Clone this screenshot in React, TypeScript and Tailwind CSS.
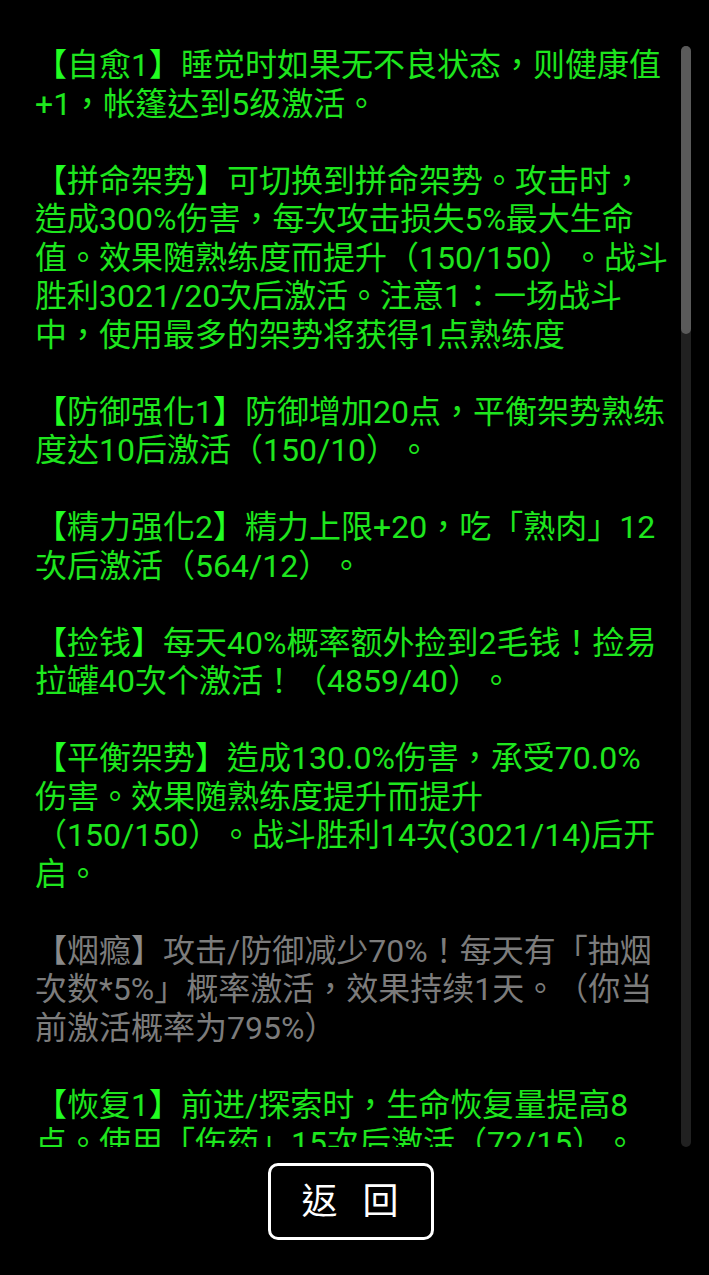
const perks = [
  {
    title: "自愈1",
    text: "睡觉时如果无不良状态，则健康值+1，帐篷达到5级激活。",
  },
  {
    title: "拼命架势",
    text: "可切换到拼命架势。攻击时，造成300%伤害，每次攻击损失5%最大生命值。效果随熟练度而提升（150/150）。战斗胜利3021/20次后激活。注意1：一场战斗中，使用最多的架势将获得1点熟练度",
  },
  {
    title: "防御强化1",
    text: "防御增加20点，平衡架势熟练度达10后激活（150/10）。",
  },
  {
    title: "精力强化2",
    text: "精力上限+20，吃「熟肉」12次后激活（564/12）。",
  },
  {
    title: "捡钱",
    text: "每天40%概率额外捡到2毛钱！捡易拉罐40次个激活！（4859/40）。",
  },
  {
    title: "平衡架势",
    text: "造成130.0%伤害，承受70.0%伤害。效果随熟练度提升而提升（150/150）。战斗胜利14次(3021/14)后开启。",
  },
  {
    title: "烟瘾",
    text: "攻击/防御减少70%！每天有「抽烟次数*5%」概率激活，效果持续1天。（你当前激活概率为795%）",
    inactive: true,
  },
  {
    title: "恢复1",
    text: "前进/探索时，生命恢复量提高8点。使用「伤药」15次后激活（72/15）。",
  },
];

export default function App() {
  return (
    <div className="flex h-screen w-full flex-col bg-black pt-[46px] pb-[35px] font-['Roboto','Noto_Sans_CJK_TC',sans-serif]">
      {/* 技能列表 + 滚动条 */}
      <div className="flex min-h-0 flex-1 pl-[35px] pr-[18px]">
        <div className="flex w-[634px] flex-col gap-[38.5px] overflow-hidden text-[32px] leading-[38.5px] [text-spacing-trim:space-all]">
          {perks.map((p) => (
            <p
              key={p.title}
              className={p.inactive ? "text-[#7c7c7c]" : "text-[#1ee61e]"}
            >
              <span className={p.inactive ? "text-[#8a8a8a]" : "text-[#22ff22]"}>【</span>
              {p.title}
              <span className={p.inactive ? "text-[#8a8a8a]" : "text-[#22ff22]"}>】</span>
              {p.text}
            </p>
          ))}
        </div>
        <div className="flex-1" />
        <div className="flex w-[10px] flex-col rounded-full bg-[#212121]">
          <div className="h-[288px] rounded-full bg-[#5a5a5a]" />
        </div>
      </div>

      <button className="mt-[16px] mr-[7px] flex h-[77px] w-[166px] items-center justify-center self-center rounded-[10px] border-[3px] border-white pl-[6px] text-[36px] tracking-[8px] text-white">
        返 回
      </button>
    </div>
  );
}
